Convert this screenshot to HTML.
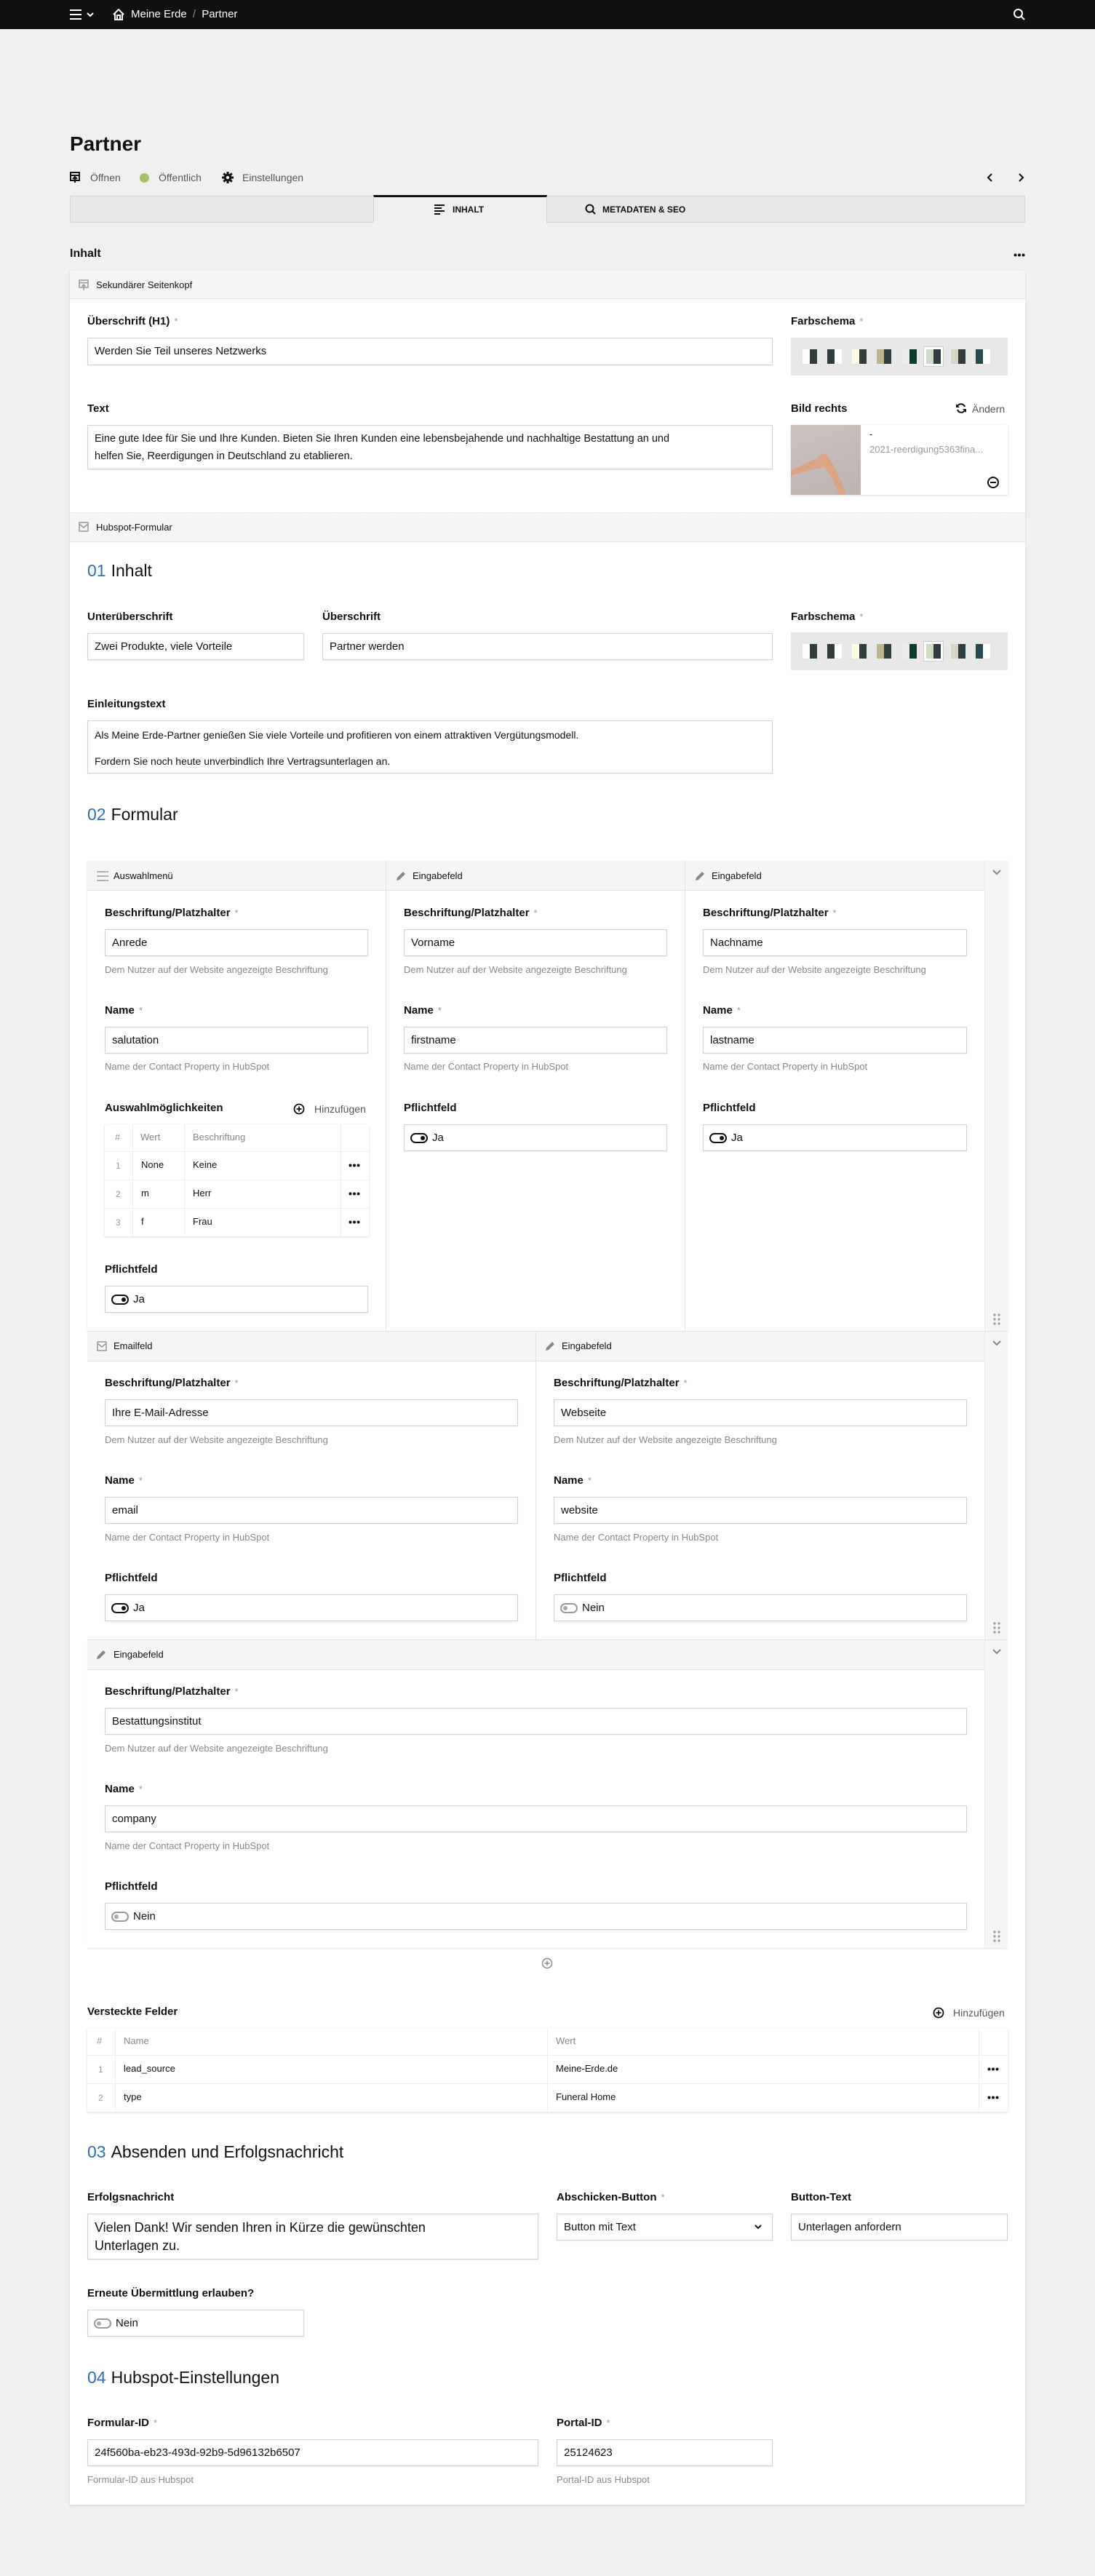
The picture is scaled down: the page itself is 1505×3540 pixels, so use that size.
<!DOCTYPE html>
<html><head><meta charset="utf-8">
<style>
*{box-sizing:border-box;margin:0;padding:0}
body{width:1505px;height:3540px;background:#f0f0f0;position:relative;font-family:"Liberation Sans",sans-serif;color:#111;overflow:hidden}
.a{position:absolute}
.lb{font-size:15px;font-weight:bold;line-height:20px;white-space:nowrap}
.lb i{font-style:normal;color:#999;font-weight:normal;margin-left:6px;font-size:13px}
.in{background:#fff;border:1px solid #d2d2d2;box-shadow:0 1px 1px rgba(0,0,0,.06);font-size:15px;line-height:35px;padding-left:9px;white-space:nowrap;overflow:hidden}
.ht{font-size:13px;color:#888;line-height:18px;white-space:nowrap}
.h2{font-size:23px;line-height:30px;white-space:nowrap}
.h2 b{color:#2f6fb5;font-weight:normal;margin-right:7px}
.bar{background:#f5f5f5;border-bottom:1px solid #e2e2e2}
.sm{font-size:13px;line-height:18px;white-space:nowrap}
.tg{display:inline-block;width:24px;height:14px;border:2px solid #111;border-radius:8px;vertical-align:middle;position:relative;margin:0 6px 0 -1px}
.tg:after{content:"";position:absolute;right:2px;top:2px;width:6px;height:6px;border-radius:50%;background:#111}
.tg.off{border-color:#999}
.tg.off:after{left:2px;right:auto;background:#aaa}
.vl{background:#e4e4e4;width:1px}
.sw{position:absolute;top:16px;width:20px;height:20px;display:flex}
.sw span{flex:1}
</style></head><body>

<!-- top bar -->
<div class="a" style="left:0;top:0;width:1505px;height:40px;background:#111"></div>
<svg class="a" style="left:96px;top:12px" width="40" height="16"><g stroke="#fff" stroke-width="2"><line x1="0" y1="2" x2="16" y2="2"/><line x1="0" y1="8" x2="16" y2="8"/><line x1="0" y1="14" x2="16" y2="14"/><polyline points="24,6 28,10 32,6" fill="none"/></g></svg>
<svg class="a" style="left:155px;top:12px" width="16" height="16"><path d="M1 8 L8 1 L15 8 M3 7 V15 H13 V7 M6 15 V9 H10 V15" stroke="#fff" stroke-width="2" fill="none"/></svg>
<div class="a" style="left:180px;top:11px;color:#fff;font-size:15px;line-height:18px">Meine Erde <span style="color:#888;margin:0 4px">/</span> Partner</div>
<svg class="a" style="left:1392px;top:11px" width="18" height="18"><circle cx="7.5" cy="7.5" r="5.5" stroke="#fff" stroke-width="2" fill="none"/><line x1="11.5" y1="11.5" x2="16" y2="16" stroke="#fff" stroke-width="2"/></svg>

<!-- title -->
<div class="a" style="left:96px;top:181px;font-size:28px;font-weight:bold;line-height:34px">Partner</div>
<svg class="a" style="left:96px;top:236px" width="14" height="16"><rect x="1" y="1" width="12" height="11" stroke="#111" stroke-width="2" fill="none"/><line x1="1" y1="5" x2="13" y2="5" stroke="#111" stroke-width="2"/><path d="M7 15 V8 M4 10 L7 7 L10 10" stroke="#111" stroke-width="2" fill="none"/></svg>
<div class="a" style="left:124px;top:235px;font-size:14px;color:#555;line-height:18px">Öffnen</div>
<div class="a" style="left:192px;top:238px;width:13px;height:13px;border-radius:50%;background:#a5c26a"></div>
<div class="a" style="left:218px;top:235px;font-size:14px;color:#555;line-height:18px">Öffentlich</div>
<svg class="a" style="left:305px;top:236px" width="16" height="16" viewBox="0 0 16 16"><g fill="#111"><circle cx="8" cy="8" r="5.2"/><rect x="6.5" y="0" width="3" height="16"/><rect x="0" y="6.5" width="16" height="3"/><rect x="6.5" y="0" width="3" height="16" transform="rotate(45 8 8)"/><rect x="6.5" y="0" width="3" height="16" transform="rotate(-45 8 8)"/></g><circle cx="8" cy="8" r="2.2" fill="#f0f0f0"/></svg>
<div class="a" style="left:333px;top:235px;font-size:14px;color:#555;line-height:18px">Einstellungen</div>
<svg class="a" style="left:1355px;top:237px" width="54" height="14"><polyline points="8,2 3,7 8,12" stroke="#111" stroke-width="2" fill="none"/><polyline points="46,2 51,7 46,12" stroke="#111" stroke-width="2" fill="none"/></svg>

<!-- tabs -->
<div class="a" style="left:96px;top:269px;width:1313px;height:37px;background:#e8e8e8;border:1px solid #d6d6d6"></div>
<div class="a" style="left:513px;top:268px;width:239px;height:39px;background:#f0f0f0;border-top:3px solid #111;border-left:1px solid #d6d6d6;border-right:1px solid #d6d6d6"></div>
<svg class="a" style="left:597px;top:281px" width="14" height="14"><g stroke="#111" stroke-width="2"><line x1="0" y1="1" x2="14" y2="1"/><line x1="0" y1="5" x2="10" y2="5"/><line x1="0" y1="9" x2="14" y2="9"/><line x1="0" y1="13" x2="8" y2="13"/></g></svg>
<div class="a" style="left:622px;top:281px;font-size:12px;font-weight:bold;line-height:14px">INHALT</div>
<svg class="a" style="left:804px;top:280px" width="16" height="16"><circle cx="6.5" cy="6.5" r="5" stroke="#111" stroke-width="2" fill="none"/><line x1="10" y1="10" x2="14" y2="14" stroke="#111" stroke-width="2"/></svg>
<div class="a" style="left:828px;top:281px;font-size:12px;font-weight:bold;line-height:14px">METADATEN &amp; SEO</div>

<div class="a" style="left:96px;top:339px;font-size:16px;font-weight:bold;line-height:20px">Inhalt</div>
<svg class="a" style="left:1393px;top:348px" width="16" height="5" fill="#111"><circle cx="2.5" cy="2.5" r="2"/><circle cx="8" cy="2.5" r="2"/><circle cx="13.5" cy="2.5" r="2"/></svg>

<!-- main card -->
<div class="a" style="left:96px;top:372px;width:1313px;height:3070px;background:#fff;box-shadow:0 1px 3px rgba(0,0,0,.12)"></div>
<div class="a bar" style="left:96px;top:372px;width:1313px;height:39px"></div>
<svg class="a" style="left:108px;top:384px" width="14" height="16"><rect x="1" y="1" width="12" height="10" stroke="#999" stroke-width="1.5" fill="none"/><line x1="1" y1="4.5" x2="13" y2="4.5" stroke="#999" stroke-width="1.5"/><path d="M7 15 V7 M4.5 9.5 L7 7 L9.5 9.5" stroke="#999" stroke-width="1.5" fill="none"/></svg>
<div class="a sm" style="left:132px;top:383px">Sekundärer Seitenkopf</div>

<div class="a lb" style="left:120px;top:432px">Überschrift (H1)<i>*</i></div>
<div class="a in" style="left:120px;top:464px;width:942px;height:38px">Werden Sie Teil unseres Netzwerks</div>
<div class="a lb" style="left:1087px;top:432px">Farbschema<i>*</i></div>
<div class="a" style="left:1087px;top:464px;width:298px;height:52px;background:#e8e8e8">
 <div class="sw" style="left:16px"><span style="background:#fff"></span><span style="background:#2f3e3c"></span></div>
 <div class="sw" style="left:50px"><span style="background:#2f3e3c"></span><span style="background:#fff"></span></div>
 <div class="sw" style="left:84px"><span style="background:#fdfbe3"></span><span style="background:#2f3e3c"></span></div>
 <div class="sw" style="left:118px"><span style="background:#bdb58f"></span><span style="background:#2f3e3c"></span></div>
 <div class="sw" style="left:153px"><span style="background:#eceef0"></span><span style="background:#0f3d2b"></span></div>
 <div class="a" style="left:182px;top:12px;width:28px;height:28px;border:1px solid #ccc;background:#fff"></div>
 <div class="sw" style="left:186px"><span style="background:#cfdcc6"></span><span style="background:#2f3e3c"></span></div>
 <div class="sw" style="left:220px"><span style="background:#d6d5c6"></span><span style="background:#2f3e3c"></span></div>
 <div class="sw" style="left:254px"><span style="background:#244a4d"></span><span style="background:#fff"></span></div>
</div>

<div class="a lb" style="left:120px;top:552px">Text</div>
<div class="a in" style="left:120px;top:584px;width:942px;height:61px;line-height:24px;padding-top:6px;font-size:14.5px">Eine gute Idee für Sie und Ihre Kunden. Bieten Sie Ihren Kunden eine lebensbejahende und nachhaltige Bestattung an und<br>helfen Sie, Reerdigungen in Deutschland zu etablieren.</div>
<div class="a lb" style="left:1087px;top:552px">Bild rechts</div>
<svg class="a" style="left:1313px;top:553px" width="16" height="16"><path d="M13 6 A5.5 5.5 0 0 0 3 5 M3 10 A5.5 5.5 0 0 0 13 11" stroke="#111" stroke-width="2" fill="none"/><path d="M1 2 V7 H6 Z M15 14 V9 H10 Z" fill="#111"/></svg>
<div class="a" style="left:1336px;top:553px;font-size:14px;line-height:18px;color:#555">Ändern</div>
<div class="a" style="left:1087px;top:584px;width:298px;height:96px;background:#fff;box-shadow:0 1px 3px rgba(0,0,0,.15)"></div>
<div class="a" style="left:1087px;top:584px;width:96px;height:96px;background:linear-gradient(160deg,#cbc3c0,#bdb3b0)"></div>
<svg class="a" style="left:1087px;top:584px" width="96" height="96"><path d="M0 62 C14 56 26 50 36 46 L42 40 C48 38 52 42 54 48 C62 60 70 78 76 96 L66 96 C60 80 54 66 46 58 C30 60 14 66 0 70 Z" fill="#dba585"/></svg>
<div class="a sm" style="left:1195px;top:588px">-</div>
<div class="a sm" style="left:1195px;top:609px;color:#999">2021-reerdigung5363fina...</div>
<svg class="a" style="left:1356px;top:654px" width="18" height="18"><circle cx="9" cy="9" r="7" stroke="#111" stroke-width="2" fill="none"/><line x1="5" y1="9" x2="13" y2="9" stroke="#111" stroke-width="2"/></svg>

<!-- Hubspot-Formular -->
<div class="a bar" style="left:96px;top:704px;width:1313px;height:41px;border-top:1px dashed #e6e6e6"></div>
<svg class="a" style="left:108px;top:717px" width="14" height="14"><rect x="1" y="1" width="12" height="12" stroke="#999" stroke-width="1.5" fill="none"/><polyline points="1,3 7,8 13,3" stroke="#999" stroke-width="1.5" fill="none"/></svg>
<div class="a sm" style="left:132px;top:716px">Hubspot-Formular</div>

<div class="a h2" style="left:120px;top:769px"><b>01</b>Inhalt</div>
<div class="a lb" style="left:120px;top:838px">Unterüberschrift</div>
<div class="a lb" style="left:443px;top:838px">Überschrift</div>
<div class="a lb" style="left:1087px;top:838px">Farbschema<i>*</i></div>
<div class="a in" style="left:120px;top:870px;width:298px;height:37px">Zwei Produkte, viele Vorteile</div>
<div class="a in" style="left:443px;top:870px;width:619px;height:37px">Partner werden</div>
<div class="a" style="left:1087px;top:869px;width:298px;height:52px;background:#e8e8e8">
 <div class="sw" style="left:16px"><span style="background:#fff"></span><span style="background:#2f3e3c"></span></div>
 <div class="sw" style="left:50px"><span style="background:#2f3e3c"></span><span style="background:#fff"></span></div>
 <div class="sw" style="left:84px"><span style="background:#fdfbe3"></span><span style="background:#2f3e3c"></span></div>
 <div class="sw" style="left:118px"><span style="background:#bdb58f"></span><span style="background:#2f3e3c"></span></div>
 <div class="sw" style="left:153px"><span style="background:#eceef0"></span><span style="background:#0f3d2b"></span></div>
 <div class="a" style="left:182px;top:12px;width:28px;height:28px;border:1px solid #ccc;background:#fff"></div>
 <div class="sw" style="left:186px"><span style="background:#cfdcc6"></span><span style="background:#2f3e3c"></span></div>
 <div class="sw" style="left:220px"><span style="background:#d6d5c6"></span><span style="background:#2f3e3c"></span></div>
 <div class="sw" style="left:254px"><span style="background:#244a4d"></span><span style="background:#fff"></span></div>
</div>
<div class="a lb" style="left:120px;top:958px">Einleitungstext</div>
<div class="a in" style="left:120px;top:990px;width:942px;height:73px;line-height:18px;font-size:14px;white-space:normal;padding-top:10px">Als Meine Erde-Partner genießen Sie viele Vorteile und profitieren von einem attraktiven Vergütungsmodell.<div style="height:18px"></div>Fordern Sie noch heute unverbindlich Ihre Vertragsunterlagen an.</div>

<div class="a h2" style="left:120px;top:1104px"><b>02</b>Formular</div>

<!-- form row 1 -->
<div class="a" style="left:120px;top:1183px;width:1265px;height:646px;background:#fff;box-shadow:0 1px 3px rgba(0,0,0,.12)"></div>
<div class="a" style="left:1353px;top:1183px;width:32px;height:1494px;background:#f5f5f5;border-left:1px solid #eaeaea"></div>
<div class="a bar" style="left:120px;top:1183px;width:1233px;height:41px"></div>
<div class="a vl" style="left:530px;top:1183px;height:646px"></div>
<div class="a vl" style="left:941px;top:1183px;height:646px"></div>
<svg class="a" style="left:133px;top:1197px" width="16" height="14"><g stroke="#999" stroke-width="1.5"><line x1="0" y1="1" x2="16" y2="1"/><line x1="0" y1="7" x2="16" y2="7"/><line x1="0" y1="13" x2="16" y2="13"/></g></svg>
<div class="a sm" style="left:156px;top:1195px">Auswahlmenü</div>
<svg class="a" style="left:543px;top:1196px" width="16" height="16"><path d="M2 14 L3 10 L11 2 L14 5 L6 13 Z" fill="#888"/></svg>
<div class="a sm" style="left:567px;top:1195px">Eingabefeld</div>
<svg class="a" style="left:954px;top:1196px" width="16" height="16"><path d="M2 14 L3 10 L11 2 L14 5 L6 13 Z" fill="#888"/></svg>
<div class="a sm" style="left:978px;top:1195px">Eingabefeld</div>

<div class="a lb" style="left:144px;top:1245px">Beschriftung/Platzhalter<i>*</i></div>
<div class="a in" style="left:144px;top:1277px;width:362px;height:37px">Anrede</div>
<div class="a ht" style="left:144px;top:1324px">Dem Nutzer auf der Website angezeigte Beschriftung</div>
<div class="a lb" style="left:144px;top:1379px">Name<i>*</i></div>
<div class="a in" style="left:144px;top:1411px;width:362px;height:37px">salutation</div>
<div class="a ht" style="left:144px;top:1457px">Name der Contact Property in HubSpot</div>
<div class="a lb" style="left:144px;top:1513px">Auswahlmöglichkeiten</div>
<svg class="a" style="left:403px;top:1516px" width="16" height="16"><circle cx="8" cy="8" r="6.5" stroke="#111" stroke-width="1.8" fill="none"/><path d="M8 4.5 V11.5 M4.5 8 H11.5" stroke="#111" stroke-width="1.8"/></svg>
<div class="a" style="left:432px;top:1515px;font-size:14px;color:#555;line-height:18px">Hinzufügen</div>
<div class="a" style="left:144px;top:1545px;width:363px;height:154px;background:#fff;box-shadow:0 1px 3px rgba(0,0,0,.15)"></div>
<div class="a vl" style="left:182px;top:1545px;height:154px;background:#eee"></div>
<div class="a vl" style="left:253px;top:1545px;height:154px;background:#eee"></div>
<div class="a vl" style="left:468px;top:1545px;height:154px;background:#eee"></div>
<div class="a" style="left:144px;top:1582px;width:363px;height:1px;background:#eee"></div>
<div class="a" style="left:144px;top:1621px;width:363px;height:1px;background:#eee"></div>
<div class="a" style="left:144px;top:1660px;width:363px;height:1px;background:#eee"></div>
<div class="a sm" style="left:158px;top:1554px;color:#999">#</div>
<div class="a sm" style="left:193px;top:1554px;color:#888">Wert</div>
<div class="a sm" style="left:265px;top:1554px;color:#888">Beschriftung</div>
<div class="a sm" style="left:159px;top:1593px;color:#999;font-size:12px">1</div><div class="a sm" style="left:194px;top:1592px">None</div><div class="a sm" style="left:265px;top:1592px">Keine</div>
<div class="a sm" style="left:159px;top:1632px;color:#999;font-size:12px">2</div><div class="a sm" style="left:194px;top:1631px">m</div><div class="a sm" style="left:265px;top:1631px">Herr</div>
<div class="a sm" style="left:159px;top:1671px;color:#999;font-size:12px">3</div><div class="a sm" style="left:194px;top:1670px">f</div><div class="a sm" style="left:265px;top:1670px">Frau</div>
<svg class="a" style="left:479px;top:1599px" width="16" height="5" fill="#111"><circle cx="2.5" cy="2.5" r="2"/><circle cx="8" cy="2.5" r="2"/><circle cx="13.5" cy="2.5" r="2"/></svg>
<svg class="a" style="left:479px;top:1638px" width="16" height="5" fill="#111"><circle cx="2.5" cy="2.5" r="2"/><circle cx="8" cy="2.5" r="2"/><circle cx="13.5" cy="2.5" r="2"/></svg>
<svg class="a" style="left:479px;top:1677px" width="16" height="5" fill="#111"><circle cx="2.5" cy="2.5" r="2"/><circle cx="8" cy="2.5" r="2"/><circle cx="13.5" cy="2.5" r="2"/></svg>
<div class="a lb" style="left:144px;top:1735px">Pflichtfeld</div>
<div class="a in" style="left:144px;top:1767px;width:362px;height:37px"><span class="tg"></span>Ja</div>

<div class="a lb" style="left:555px;top:1245px">Beschriftung/Platzhalter<i>*</i></div>
<div class="a in" style="left:555px;top:1277px;width:362px;height:37px">Vorname</div>
<div class="a ht" style="left:555px;top:1324px">Dem Nutzer auf der Website angezeigte Beschriftung</div>
<div class="a lb" style="left:555px;top:1379px">Name<i>*</i></div>
<div class="a in" style="left:555px;top:1411px;width:362px;height:37px">firstname</div>
<div class="a ht" style="left:555px;top:1457px">Name der Contact Property in HubSpot</div>
<div class="a lb" style="left:555px;top:1513px">Pflichtfeld</div>
<div class="a in" style="left:555px;top:1545px;width:362px;height:37px"><span class="tg"></span>Ja</div>

<div class="a lb" style="left:966px;top:1245px">Beschriftung/Platzhalter<i>*</i></div>
<div class="a in" style="left:966px;top:1277px;width:363px;height:37px">Nachname</div>
<div class="a ht" style="left:966px;top:1324px">Dem Nutzer auf der Website angezeigte Beschriftung</div>
<div class="a lb" style="left:966px;top:1379px">Name<i>*</i></div>
<div class="a in" style="left:966px;top:1411px;width:363px;height:37px">lastname</div>
<div class="a ht" style="left:966px;top:1457px">Name der Contact Property in HubSpot</div>
<div class="a lb" style="left:966px;top:1513px">Pflichtfeld</div>
<div class="a in" style="left:966px;top:1545px;width:363px;height:37px"><span class="tg"></span>Ja</div>

<!-- form row 2 -->
<div class="a" style="left:120px;top:1829px;width:1265px;height:1px;background:#e2e2e2"></div>
<div class="a bar" style="left:120px;top:1830px;width:1233px;height:41px"></div>
<div class="a vl" style="left:736px;top:1830px;height:423px"></div>
<svg class="a" style="left:133px;top:1843px" width="14" height="14"><rect x="1" y="1" width="12" height="12" stroke="#999" stroke-width="1.5" fill="none"/><polyline points="1,3 7,8 13,3" stroke="#999" stroke-width="1.5" fill="none"/></svg>
<div class="a sm" style="left:156px;top:1841px">Emailfeld</div>
<svg class="a" style="left:748px;top:1842px" width="16" height="16"><path d="M2 14 L3 10 L11 2 L14 5 L6 13 Z" fill="#888"/></svg>
<div class="a sm" style="left:772px;top:1841px">Eingabefeld</div>

<div class="a lb" style="left:144px;top:1891px">Beschriftung/Platzhalter<i>*</i></div>
<div class="a in" style="left:144px;top:1923px;width:568px;height:37px">Ihre E-Mail-Adresse</div>
<div class="a ht" style="left:144px;top:1970px">Dem Nutzer auf der Website angezeigte Beschriftung</div>
<div class="a lb" style="left:144px;top:2025px">Name<i>*</i></div>
<div class="a in" style="left:144px;top:2057px;width:568px;height:37px">email</div>
<div class="a ht" style="left:144px;top:2104px">Name der Contact Property in HubSpot</div>
<div class="a lb" style="left:144px;top:2159px">Pflichtfeld</div>
<div class="a in" style="left:144px;top:2191px;width:568px;height:37px"><span class="tg"></span>Ja</div>

<div class="a lb" style="left:761px;top:1891px">Beschriftung/Platzhalter<i>*</i></div>
<div class="a in" style="left:761px;top:1923px;width:568px;height:37px">Webseite</div>
<div class="a ht" style="left:761px;top:1970px">Dem Nutzer auf der Website angezeigte Beschriftung</div>
<div class="a lb" style="left:761px;top:2025px">Name<i>*</i></div>
<div class="a in" style="left:761px;top:2057px;width:568px;height:37px">website</div>
<div class="a ht" style="left:761px;top:2104px">Name der Contact Property in HubSpot</div>
<div class="a lb" style="left:761px;top:2159px">Pflichtfeld</div>
<div class="a in" style="left:761px;top:2191px;width:568px;height:37px"><span class="tg off"></span>Nein</div>

<!-- form row 3 -->
<div class="a" style="left:120px;top:2253px;width:1265px;height:1px;background:#e2e2e2"></div>
<div class="a bar" style="left:120px;top:2254px;width:1233px;height:41px"></div>
<svg class="a" style="left:131px;top:2266px" width="16" height="16"><path d="M2 14 L3 10 L11 2 L14 5 L6 13 Z" fill="#888"/></svg>
<div class="a sm" style="left:156px;top:2265px">Eingabefeld</div>
<div class="a lb" style="left:144px;top:2315px">Beschriftung/Platzhalter<i>*</i></div>
<div class="a in" style="left:144px;top:2347px;width:1185px;height:37px">Bestattungsinstitut</div>
<div class="a ht" style="left:144px;top:2394px">Dem Nutzer auf der Website angezeigte Beschriftung</div>
<div class="a lb" style="left:144px;top:2449px">Name<i>*</i></div>
<div class="a in" style="left:144px;top:2481px;width:1185px;height:37px">company</div>
<div class="a ht" style="left:144px;top:2528px">Name der Contact Property in HubSpot</div>
<div class="a lb" style="left:144px;top:2583px">Pflichtfeld</div>
<div class="a in" style="left:144px;top:2615px;width:1185px;height:37px"><span class="tg off"></span>Nein</div>
<div class="a" style="left:120px;top:2253px;width:1265px;height:424px;box-shadow:0 2px 2px -1px rgba(0,0,0,.12)"></div>

<!-- chevrons + handles -->
<svg class="a" style="left:1364px;top:1195px" width="12" height="8"><polyline points="1,1 6,6 11,1" stroke="#888" stroke-width="2" fill="none"/></svg>
<svg class="a" style="left:1364px;top:1842px" width="12" height="8"><polyline points="1,1 6,6 11,1" stroke="#888" stroke-width="2" fill="none"/></svg>
<svg class="a" style="left:1364px;top:2266px" width="12" height="8"><polyline points="1,1 6,6 11,1" stroke="#888" stroke-width="2" fill="none"/></svg>
<svg class="a" style="left:1365px;top:1805px" width="10" height="16" fill="#999"><circle cx="2" cy="2" r="1.6"/><circle cx="8" cy="2" r="1.6"/><circle cx="2" cy="8" r="1.6"/><circle cx="8" cy="8" r="1.6"/><circle cx="2" cy="14" r="1.6"/><circle cx="8" cy="14" r="1.6"/></svg>
<svg class="a" style="left:1365px;top:2229px" width="10" height="16" fill="#999"><circle cx="2" cy="2" r="1.6"/><circle cx="8" cy="2" r="1.6"/><circle cx="2" cy="8" r="1.6"/><circle cx="8" cy="8" r="1.6"/><circle cx="2" cy="14" r="1.6"/><circle cx="8" cy="14" r="1.6"/></svg>
<svg class="a" style="left:1365px;top:2653px" width="10" height="16" fill="#999"><circle cx="2" cy="2" r="1.6"/><circle cx="8" cy="2" r="1.6"/><circle cx="2" cy="8" r="1.6"/><circle cx="8" cy="8" r="1.6"/><circle cx="2" cy="14" r="1.6"/><circle cx="8" cy="14" r="1.6"/></svg>

<svg class="a" style="left:744px;top:2690px" width="16" height="16"><circle cx="8" cy="8" r="6.5" stroke="#888" stroke-width="1.5" fill="none"/><path d="M8 4.5 V11.5 M4.5 8 H11.5" stroke="#888" stroke-width="1.5"/></svg>

<!-- hidden fields -->
<div class="a lb" style="left:120px;top:2755px">Versteckte Felder</div>
<svg class="a" style="left:1282px;top:2758px" width="16" height="16"><circle cx="8" cy="8" r="6.5" stroke="#111" stroke-width="1.8" fill="none"/><path d="M8 4.5 V11.5 M4.5 8 H11.5" stroke="#111" stroke-width="1.8"/></svg>
<div class="a" style="left:1310px;top:2757px;font-size:14px;color:#555;line-height:18px">Hinzufügen</div>
<div class="a" style="left:120px;top:2787px;width:1265px;height:115px;background:#fff;box-shadow:0 1px 3px rgba(0,0,0,.15)"></div>
<div class="a vl" style="left:158px;top:2787px;height:115px;background:#eee"></div>
<div class="a vl" style="left:752px;top:2787px;height:115px;background:#eee"></div>
<div class="a vl" style="left:1345px;top:2787px;height:115px;background:#eee"></div>
<div class="a" style="left:120px;top:2824px;width:1265px;height:1px;background:#eee"></div>
<div class="a" style="left:120px;top:2863px;width:1265px;height:1px;background:#eee"></div>
<div class="a sm" style="left:133px;top:2796px;color:#999">#</div>
<div class="a sm" style="left:170px;top:2796px;color:#888">Name</div>
<div class="a sm" style="left:764px;top:2796px;color:#888">Wert</div>
<div class="a sm" style="left:135px;top:2835px;color:#999;font-size:12px">1</div><div class="a sm" style="left:170px;top:2834px">lead_source</div><div class="a sm" style="left:764px;top:2834px">Meine-Erde.de</div>
<div class="a sm" style="left:135px;top:2874px;color:#999;font-size:12px">2</div><div class="a sm" style="left:170px;top:2873px">type</div><div class="a sm" style="left:764px;top:2873px">Funeral Home</div>
<svg class="a" style="left:1357px;top:2841px" width="16" height="5" fill="#111"><circle cx="2.5" cy="2.5" r="2"/><circle cx="8" cy="2.5" r="2"/><circle cx="13.5" cy="2.5" r="2"/></svg>
<svg class="a" style="left:1357px;top:2880px" width="16" height="5" fill="#111"><circle cx="2.5" cy="2.5" r="2"/><circle cx="8" cy="2.5" r="2"/><circle cx="13.5" cy="2.5" r="2"/></svg>

<!-- 03 -->
<div class="a h2" style="left:120px;top:2942px"><b>03</b>Absenden und Erfolgsnachricht</div>
<div class="a lb" style="left:120px;top:3010px">Erfolgsnachricht</div>
<div class="a lb" style="left:765px;top:3010px">Abschicken-Button<i>*</i></div>
<div class="a lb" style="left:1087px;top:3010px">Button-Text</div>
<div class="a in" style="left:120px;top:3042px;width:620px;height:63px;font-size:18px;line-height:25px;padding-top:6px">Vielen Dank! Wir senden Ihren in Kürze die gewünschten<br>Unterlagen zu.</div>
<div class="a in" style="left:765px;top:3042px;width:297px;height:37px">Button mit Text</div>
<svg class="a" style="left:1037px;top:3057px" width="10" height="7"><polyline points="1,1 5,5 9,1" stroke="#111" stroke-width="2" fill="none"/></svg>
<div class="a in" style="left:1087px;top:3042px;width:298px;height:37px">Unterlagen anfordern</div>
<div class="a lb" style="left:120px;top:3142px">Erneute Übermittlung erlauben?</div>
<div class="a in" style="left:120px;top:3174px;width:298px;height:37px"><span class="tg off"></span>Nein</div>

<!-- 04 -->
<div class="a h2" style="left:120px;top:3252px"><b>04</b>Hubspot-Einstellungen</div>
<div class="a lb" style="left:120px;top:3320px">Formular-ID<i>*</i></div>
<div class="a lb" style="left:765px;top:3320px">Portal-ID<i>*</i></div>
<div class="a in" style="left:120px;top:3352px;width:620px;height:37px">24f560ba-eb23-493d-92b9-5d96132b6507</div>
<div class="a in" style="left:765px;top:3352px;width:297px;height:37px">25124623</div>
<div class="a ht" style="left:120px;top:3399px">Formular-ID aus Hubspot</div>
<div class="a ht" style="left:765px;top:3399px">Portal-ID aus Hubspot</div>

</body></html>
